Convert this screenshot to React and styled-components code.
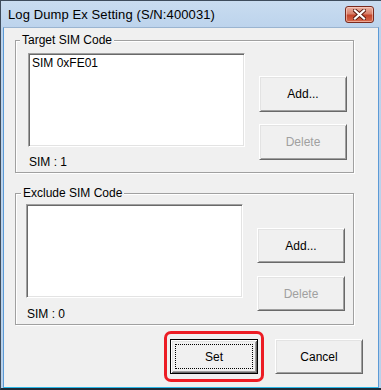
import React from "react";
import styled, { createGlobalStyle, css } from "styled-components";

const Global = createGlobalStyle`
	html, body {
		margin: 0;
		padding: 0;
		background: #ffffff;
	}
	* {
		box-sizing: border-box;
	}
`;

const Window = styled.div`
	width: 381px;
	height: 390px;
	display: flex;
	flex-direction: column;
	border-top: 1px solid #3e4c5c;
	border-left: 1px solid #3e4c5c;
	border-bottom: 2px solid #1e2a36;
	background: linear-gradient(#c9dcf0, #bcd3ec 28px, #b9d1ea);
	font-family: "Liberation Sans", Arial, sans-serif;
`;

const TitleBar = styled.div`
	height: 26px;
	display: flex;
	align-items: center;
	justify-content: space-between;
	padding: 0 7px 0 7px;
`;

const Title = styled.span`
	font-size: 13px;
	color: #000;
	letter-spacing: 0.1px;
`;

const CloseButton = styled.div`
	width: 29px;
	height: 17px;
	border: 1px solid #7a2a1e;
	border-radius: 3px;
	display: flex;
	align-items: center;
	justify-content: center;
	background: linear-gradient(#eab1a2, #d9816c 45%, #c4452c 55%, #d66a4c);
	box-shadow: inset 0 0 0 1px rgba(255, 220, 210, 0.55);
`;

const Client = styled.div`
	flex: 1;
	margin: 0 2px 0 2px;
	border-top: 1px solid #9ab4d0;
	border-left: 1px solid #5b9ad6;
	border-right: 1px solid #5b9ad6;
	border-bottom: 1px solid #2ab6e6;
	background: #f0f0f0;
	padding: 5px 0 0 11px;
	display: flex;
	flex-direction: column;
	font-size: 12px;
	color: #000;
`;

const Group = styled.fieldset`
	width: 339px;
	margin: ${(p) => p.$top || 0}px 0 0 0;
	padding: 0;
	border: 1px solid #a0a0a0;
	box-shadow: 1px 1px 0 #ffffff, inset 1px 1px 0 #ffffff;
	min-width: 0;
`;

const Legend = styled.legend`
	margin-left: ${(p) => p.$left}px;
	padding: 0 2px;
	font-size: 12px;
	line-height: 14px;
	background: #f0f0f0;
`;

const GroupBody = styled.div`
	display: grid;
	grid-template-columns: 217px 88px;
	column-gap: 14px;
	padding: ${(p) => p.$top}px 0 3px ${(p) => p.$left}px;
`;

const ListColumn = styled.div`
	display: flex;
	flex-direction: column;
	gap: ${(p) => p.$gap}px;
`;

const ListBox = styled.div`
	height: 94px;
	background: #ffffff;
	border-top: 1px solid #a0a0a0;
	border-left: 1px solid #a0a0a0;
	border-right: 1px solid #ffffff;
	border-bottom: 1px solid #ffffff;
	box-shadow: inset 1px 1px 0 #696969, inset -1px -1px 0 #e3e3e3;
	padding: 2px 3px;
	line-height: 14px;
`;

const Count = styled.div`
	line-height: 14px;
	padding-left: 1px;
`;

const ButtonColumn = styled.div`
	display: flex;
	flex-direction: column;
	gap: ${(p) => p.$gap}px;
	padding-top: ${(p) => p.$top}px;
`;

const Button = styled.div`
	width: 88px;
	height: ${(p) => p.$h || 36}px;
	display: flex;
	align-items: center;
	justify-content: center;
	background: #f0f0f0;
	border-top: 1px solid #ffffff;
	border-left: 1px solid #ffffff;
	border-right: 1px solid #696969;
	border-bottom: 1px solid #696969;
	box-shadow: inset 1px 1px 0 #e3e3e3, inset -1px -1px 0 #a0a0a0;
	font-size: 12px;
	color: ${(p) => (p.$disabled ? "#a0a0a0" : "#000")};
	position: relative;
	${(p) =>
		p.$default &&
		css`
			border: 1px solid #000;
			box-shadow: inset 1px 1px 0 #ffffff, inset -1px -1px 0 #696969,
				inset 2px 2px 0 #e3e3e3, inset -2px -2px 0 #a0a0a0;
		`}
`;

const FocusRect = styled.div`
	position: absolute;
	inset: 4px;
	border: 1px dotted #000;
`;

const Footer = styled.div`
	display: flex;
	align-items: center;
	justify-content: flex-end;
	gap: 11px;
	margin-top: 6px;
	padding-right: 15px;
`;

const Highlight = styled.div`
	border: 3px solid #ec1c24;
	border-radius: 7px;
	padding: 5px 3px;
`;

function Close() {
	return (
		<CloseButton>
			<svg width="13" height="11" viewBox="0 0 13 11">
				<path d="M2 1.5 L11 9.5 M11 1.5 L2 9.5" stroke="#5a1a10" strokeWidth="4" strokeLinecap="square" />
				<path d="M2 1.5 L11 9.5 M11 1.5 L2 9.5" stroke="#ffffff" strokeWidth="2.2" strokeLinecap="square" />
			</svg>
		</CloseButton>
	);
}

function CodeGroup({ title, items, top, legendLeft, bodyTop, bodyLeft, countGap, buttonTop, buttonGap, buttonH }) {
	return (
		<Group $top={top}>
			<Legend $left={legendLeft}>{title}</Legend>
			<GroupBody $top={bodyTop} $left={bodyLeft}>
				<ListColumn $gap={countGap}>
					<ListBox>
						{items.map((item) => (
							<div key={item}>{item}</div>
						))}
					</ListBox>
					<Count>SIM : {items.length}</Count>
				</ListColumn>
				<ButtonColumn $top={buttonTop} $gap={buttonGap}>
					<Button $h={buttonH}>Add...</Button>
					<Button $h={buttonH} $disabled>
						Delete
					</Button>
				</ButtonColumn>
			</GroupBody>
		</Group>
	);
}

export default function App() {
	return (
		<>
			<Global />
			<Window>
				<TitleBar>
					<Title>Log Dump Ex Setting (S/N:400031)</Title>
					<Close />
				</TitleBar>
				<Client>
					<CodeGroup
						title="Target SIM Code"
						items={["SIM 0xFE01"]}
						top={0}
						legendLeft={4}
						bodyTop={6}
						bodyLeft={12}
						countGap={8}
						buttonTop={23}
						buttonGap={12}
						buttonH={36}
					/>
					<CodeGroup
						title="Exclude SIM Code"
						items={[]}
						top={13}
						legendLeft={5}
						bodyTop={4}
						bodyLeft={10}
						countGap={9}
						buttonTop={24}
						buttonGap={13}
						buttonH={35}
					/>
					<Footer>
						<Highlight>
							<Button $h={35} $default>
								<FocusRect />
								Set
							</Button>
						</Highlight>
						<Button $h={35}>Cancel</Button>
					</Footer>
				</Client>
			</Window>
		</>
	);
}
